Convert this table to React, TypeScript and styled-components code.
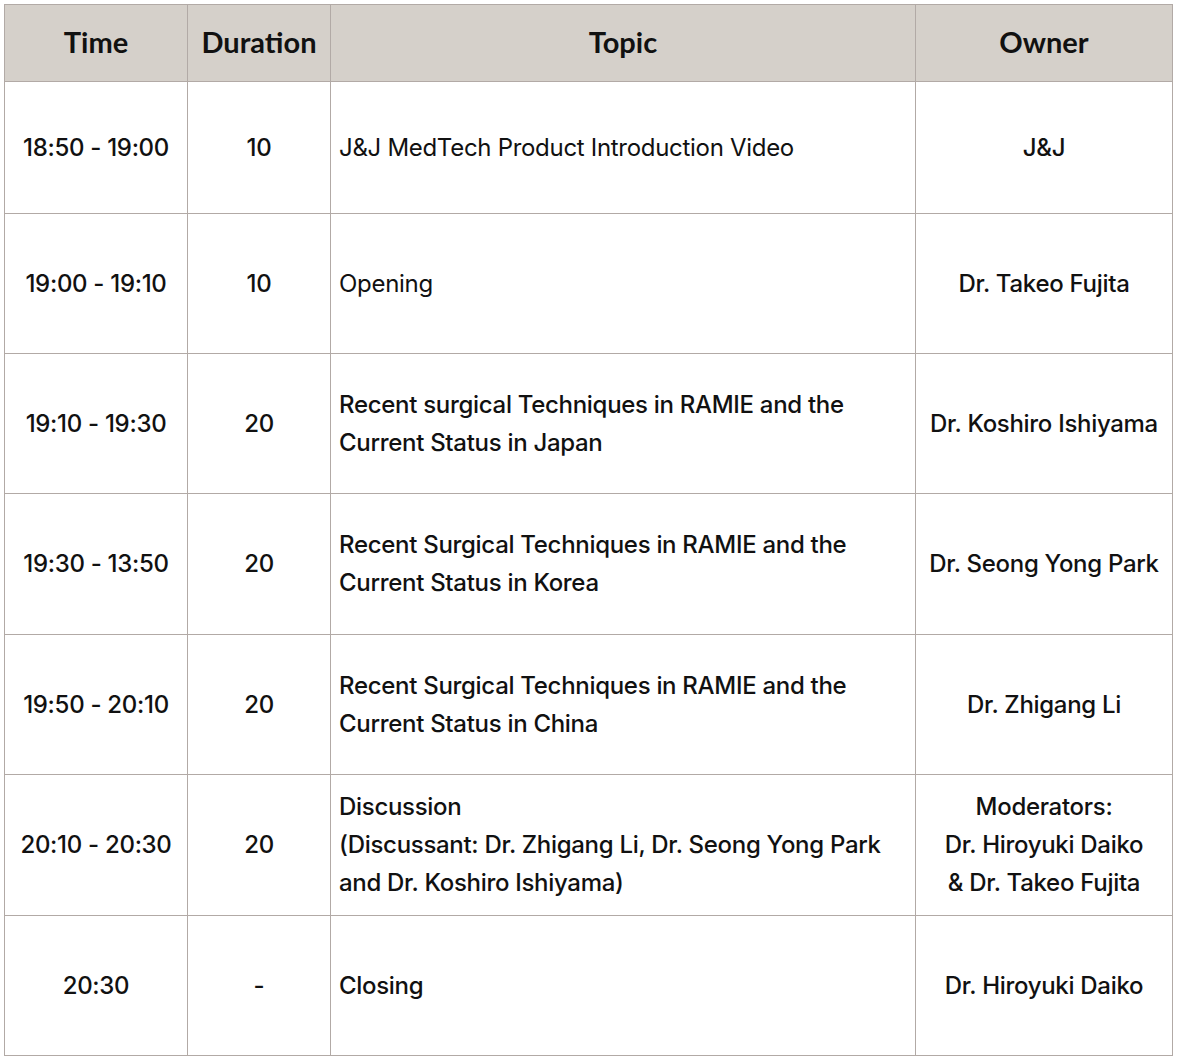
import React from "react";
import styled, { createGlobalStyle } from "styled-components";

const Global = createGlobalStyle`
  html, body { margin: 0; padding: 0; background: #ffffff; }
  body { font-family: Inter, "Noto Sans", sans-serif; color: #111111; }
`;

const Page = styled.div`
  padding: 4px 4px 0 4px;
`;

const Table = styled.table`
  border-collapse: collapse;
  table-layout: fixed;
  width: 1168px;
`;

const HeadCell = styled.th<{ $w: number }>`
  width: ${(p) => p.$w}px;
  height: 73px;
  background: #d5d0ca;
  border: 1px solid #b2aaa6;
  font-family: Lato, "Noto Sans", sans-serif;
  font-weight: 700;
  font-size: 29px;
  color: #111111;
  text-align: center;
  vertical-align: middle;
  padding: 0 0 3px 0;
`;

const Row = styled.tr<{ $h: number }>`
  height: ${(p) => p.$h}px;
`;

const Cell = styled.td<{ $align?: "left" | "center"; $light?: boolean }>`
  border: 1px solid #b2aaa6;
  text-align: ${(p) => p.$align ?? "center"};
  vertical-align: middle;
  font-size: 24px;
  line-height: 38px;
  font-weight: ${(p) => (p.$light ? 400 : 500)};
  letter-spacing: -0.3px;
  padding: ${(p) => (p.$align === "left" ? "0 4px 0 8px" : "0")};
  color: #111111;
  white-space: nowrap;
`;

type Item = {
  time: string;
  dur: string;
  topic: string[];
  owner: string[];
  h: number;
  light?: boolean;
};

const rows: Item[] = [
  { time: "18:50 - 19:00", dur: "10", topic: ["J&J MedTech Product Introduction Video"], owner: ["J&J"], h: 132, light: true },
  { time: "19:00 - 19:10", dur: "10", topic: ["Opening"], owner: ["Dr. Takeo Fujita"], h: 140, light: true },
  { time: "19:10 - 19:30", dur: "20", topic: ["Recent surgical Techniques in RAMIE and the", "Current Status in Japan"], owner: ["Dr. Koshiro Ishiyama"], h: 140 },
  { time: "19:30 - 13:50", dur: "20", topic: ["Recent Surgical Techniques in RAMIE and the", "Current Status in Korea"], owner: ["Dr. Seong Yong Park"], h: 141 },
  { time: "19:50 - 20:10", dur: "20", topic: ["Recent Surgical Techniques in RAMIE and the", "Current Status in China"], owner: ["Dr. Zhigang Li"], h: 140 },
  { time: "20:10 - 20:30", dur: "20", topic: ["Discussion", "(Discussant: Dr. Zhigang Li, Dr. Seong Yong Park", "and Dr. Koshiro Ishiyama)"], owner: ["Moderators:", "Dr. Hiroyuki Daiko", "& Dr. Takeo Fujita"], h: 141 },
  { time: "20:30", dur: "-", topic: ["Closing"], owner: ["Dr. Hiroyuki Daiko"], h: 140 },
];

const Lines = ({ lines }: { lines: string[] }) => (
  <>
    {lines.map((l, i) => (
      <React.Fragment key={i}>
        {i > 0 && <br />}
        {l}
      </React.Fragment>
    ))}
  </>
);

export default function App() {
  return (
    <Page>
      <Global />
      <Table>
        <thead>
          <tr>
            <HeadCell $w={182}>Time</HeadCell>
            <HeadCell $w={142}>Duration</HeadCell>
            <HeadCell $w={584}>Topic</HeadCell>
            <HeadCell $w={256}>Owner</HeadCell>
          </tr>
        </thead>
        <tbody>
          {rows.map((r, i) => (
            <Row key={i} $h={r.h}>
              <Cell>{r.time}</Cell>
              <Cell>{r.dur}</Cell>
              <Cell $align="left" $light={i === 0 || i === 1}>
                <Lines lines={r.topic} />
              </Cell>
              <Cell>
                <Lines lines={r.owner} />
              </Cell>
            </Row>
          ))}
        </tbody>
      </Table>
    </Page>
  );
}
